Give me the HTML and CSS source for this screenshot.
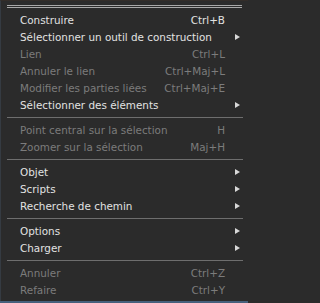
FILE: index.html
```html
<!DOCTYPE html>
<html>
<head>
<meta charset="utf-8">
<link rel="stylesheet" href="styles.css">
</head>
<body>
<div class="menu">
  <div class="tear"></div>
  <div class="row"><span class="label">Construire</span><span class="key">Ctrl+B</span><span class="sub"></span></div>
  <div class="row"><span class="label">Sélectionner un outil de construction</span><span class="key"></span><span class="sub"><i class="arrow"></i></span></div>
  <div class="row off"><span class="label">Lien</span><span class="key">Ctrl+L</span><span class="sub"></span></div>
  <div class="row off"><span class="label">Annuler le lien</span><span class="key">Ctrl+Maj+L</span><span class="sub"></span></div>
  <div class="row off"><span class="label">Modifier les parties liées</span><span class="key">Ctrl+Maj+E</span><span class="sub"></span></div>
  <div class="row"><span class="label">Sélectionner des éléments</span><span class="key"></span><span class="sub"><i class="arrow"></i></span></div>
  <div class="sep"></div>
  <div class="row off"><span class="label">Point central sur la sélection</span><span class="key">H</span><span class="sub"></span></div>
  <div class="row off"><span class="label">Zoomer sur la sélection</span><span class="key">Maj+H</span><span class="sub"></span></div>
  <div class="sep"></div>
  <div class="row"><span class="label">Objet</span><span class="key"></span><span class="sub"><i class="arrow"></i></span></div>
  <div class="row"><span class="label">Scripts</span><span class="key"></span><span class="sub"><i class="arrow"></i></span></div>
  <div class="row"><span class="label">Recherche de chemin</span><span class="key"></span><span class="sub"><i class="arrow"></i></span></div>
  <div class="sep"></div>
  <div class="row"><span class="label">Options</span><span class="key"></span><span class="sub"><i class="arrow"></i></span></div>
  <div class="row"><span class="label">Charger</span><span class="key"></span><span class="sub"><i class="arrow"></i></span></div>
  <div class="sep"></div>
  <div class="row off"><span class="label">Annuler</span><span class="key">Ctrl+Z</span><span class="sub"></span></div>
  <div class="row off"><span class="label">Refaire</span><span class="key">Ctrl+Y</span><span class="sub"></span></div>
</div>
</body>
</html>
```

FILE: styles.css
```css
html {
  margin: 0;
  padding: 0;
  background: #2b2b2b;
}
body {
  margin: 0;
  padding: 0;
  background: #46607c;
  width: 248px;
  height: 303px;
  overflow: hidden;
  font-family: "DejaVu Sans", sans-serif;
  font-size: 10.4px;
}
.menu {
  width: 248px;
  height: 301px;
  background: #2b2b2b;
  box-sizing: border-box;
  border-left: 1px solid #353b42;
  border-top: 1px solid #332d29;
}
.tear {
  margin: 4px 6px 3px 6px;
  height: 1px;
  border-top: 1px solid #a8a8a8;
  border-bottom: 1px solid #a8a8a8;
}
.row {
  display: flex;
  align-items: center;
  height: 17px;
  padding-left: 19px;
  color: #e2e2e2;
  white-space: nowrap;
}
.row.off {
  color: #7c7c7c;
}
.label {
  flex: 1;
}
.key {
  text-align: right;
}
.sub {
  width: 23px;
  height: 17px;
  display: flex;
  align-items: center;
  justify-content: flex-end;
  padding-right: 8px;
  box-sizing: border-box;
}
.arrow {
  width: 0;
  height: 0;
  border-left: 5px solid #d8d8d8;
  border-top: 3px solid transparent;
  border-bottom: 3px solid transparent;
}
.sep {
  margin: 4px 5px 3px 6px;
  height: 1px;
  background: #6e6e6e;
}
```
